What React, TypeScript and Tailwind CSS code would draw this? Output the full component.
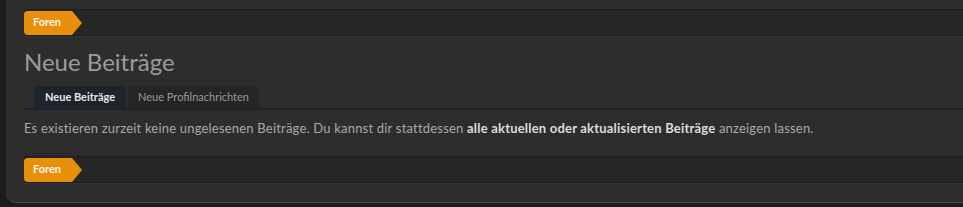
import React from 'react';

function Breadcrumb() {
  return (
    <div className="flex h-[27px] items-center border-y border-[#1f1f1f] bg-[#262626] shadow-[0_1px_0_#343434]">
      <a className="relative flex h-[24px] items-center rounded-l-[4px] bg-[#e8900b] pl-[9px] pr-[11px] text-[11px] font-bold text-[#fff6e6]">
        Foren
        <span className="absolute right-[-10px] top-0 h-0 w-0 border-y-[12px] border-l-[10px] border-y-transparent border-l-[#e8900b]" />
      </a>
    </div>
  );
}

export default function App() {
  return (
    <div className="h-[207px] w-[963px] overflow-hidden bg-[#1c1c1c]" style={{ fontFamily: 'Lato, "Open Sans", sans-serif' }}>
      <div className="ml-[6px] h-[203px] rounded-bl-[10px] border-b border-[#4a4a4a] bg-[#2d2d2d] pl-[18px] pt-[9px]">
        <Breadcrumb />

        <h1 className="mt-[12px] text-[24px] leading-[28px] text-[#9b9b9b]">Neue Beiträge</h1>

        <div className="mt-[10px] flex gap-[2px] border-b-[2px] border-[#1f232b] pl-[10px]">
          <div className="flex h-[22px] items-center rounded-t-[4px] bg-[#1f232b] px-[11px] text-[11px] font-bold text-[#e6e6e6]">
            Neue Beiträge
          </div>
          <div className="flex h-[22px] items-center rounded-t-[4px] bg-[#252525] px-[10px] text-[11px] text-[#9a9a9a]">
            Neue Profilnachrichten
          </div>
        </div>

        <p className="mt-[9px] text-[13px] leading-[18px] tracking-[0.2px] text-[#a9a9a9]">
          Es existieren zurzeit keine ungelesenen Beiträge. Du kannst dir stattdessen{' '}
          <a className="font-bold text-[#dcdcdc]">alle aktuellen oder aktualisierten Beiträge</a> anzeigen lassen.
        </p>

        <div className="mt-[19px]">
          <Breadcrumb />
        </div>
      </div>
    </div>
  );
}
